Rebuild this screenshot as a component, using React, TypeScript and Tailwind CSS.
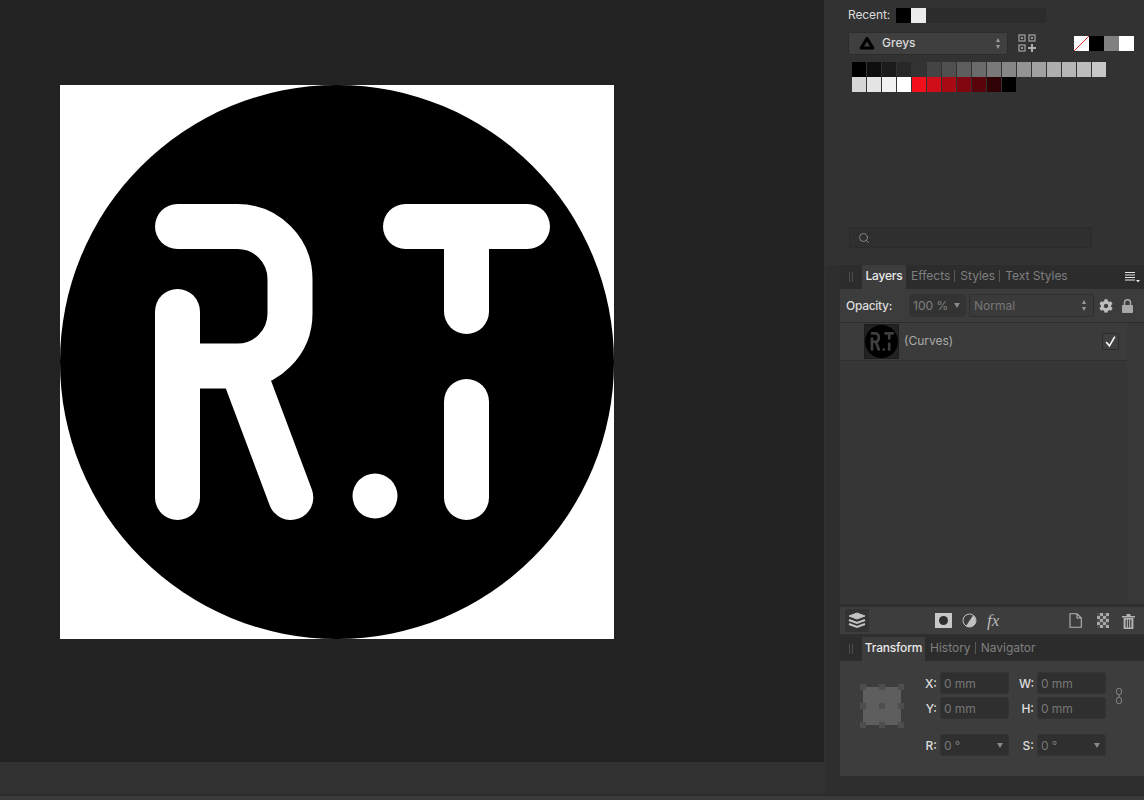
import { FaCog } from "react-icons/fa"
import { Search } from "lucide-react"

const greys = ["bg-[#000000]", "bg-[#0e0e0e]", "bg-[#1b1b1b]", "bg-[#282828]", "bg-[#333333]", "bg-[#444444]", "bg-[#505050]", "bg-[#5e5e5e]", "bg-[#6b6b6b]", "bg-[#797979]", "bg-[#868686]", "bg-[#949494]", "bg-[#a1a1a1]", "bg-[#aeaeae]", "bg-[#b6b6b6]", "bg-[#bdbdbd]", "bg-[#c8c8c8]"]
const reds = ["bg-[#d6d6d6]", "bg-[#e4e4e4]", "bg-[#f1f1f1]", "bg-[#ffffff]", "bg-[#f40f1c]", "bg-[#d00d18]", "bg-[#a80a13]", "bg-[#800710]", "bg-[#58040a]", "bg-[#300205]", "bg-[#000000]"]

// R.T mark, coordinates are the screenshot's minus the image origin (60,85)
function Logo({ className, bg = true }: { className: string; bg?: boolean }) {
    return (
        <svg viewBox="0 0 554 554" className={className}>
            {bg && <rect width="554" height="554" fill="#fff" />}
            <circle cx="277" cy="277" r="277" fill="#000" />
            <g fill="none" stroke={bg ? "#fff" : "#3f3f3f"} strokeWidth="45" strokeLinecap="round">
                <path d="M117.5 141.5H177.5A52.5 52.5 0 0 1 230 194V228.5A52.5 52.5 0 0 1 177.5 281H117.5" />
                <path d="M117.5 226.5V412.5" />
                <path d="M183.7 287L230.8 412.5" />
                <path d="M345.5 141.5H467.5" />
                <path d="M406.5 141.5V226.5" />
                <path d="M406.5 316.5V412.5" />
            </g>
            <circle cx="315" cy="411" r="22.5" fill={bg ? "#fff" : "#3f3f3f"} />
        </svg>
    )
}

function Tabs({ active, others, tabWidth }: { active: string; others: string[]; tabWidth: string }) {
    return (
        <div className="flex h-[24px] items-stretch bg-[#2c2c2c] text-[12px]">
            <div className="flex w-[22px] items-center justify-center gap-[2px]">
                <span className="h-[10px] w-px bg-[#4c4c4c]" />
                <span className="h-[10px] w-px bg-[#4c4c4c]" />
            </div>
            <div className={`flex items-center justify-center bg-[#3d3d3d] pb-[2px] font-medium tracking-[-0.2px] text-[#e8e8e8] ${tabWidth}`}>{active}</div>
            <div className="ml-[5px] flex items-center pb-[2px] text-[#7f7f7f]">
                {others.map((name, i) => (
                    <span key={name} className={i > 0 ? "ml-[4px] border-l border-[#5a5a5a] pl-[5px] leading-[12px]" : "leading-[12px]"}>{name}</span>
                ))}
            </div>
        </div>
    )
}

function Field({ label, value, arrow }: { label: string; value: string; arrow?: boolean }) {
    return (
        <div className="flex items-center gap-[3px]">
            <span className="w-[15px] pt-[2px] text-right text-[12px] font-medium text-[#dedede]">{label}</span>
            <div className="flex h-[22px] w-[69px] items-center justify-between rounded-[3px] border border-[#333] bg-[#2f2f2f] pl-[3px] pr-[5px] text-[12px] tracking-[-0.1px] text-[#777]">
                <span className="pt-[2px]">{value}</span>
                {arrow && <span className="h-0 w-0 border-x-[3px] border-t-[5px] border-x-transparent border-t-[#8a8a8a]" />}
            </div>
        </div>
    )
}

function Stepper() {
    return (
        <span className="flex flex-col gap-[3px]">
            <span className="h-0 w-0 border-x-[2.5px] border-b-[4px] border-x-transparent border-b-[#9a9a9a]" />
            <span className="h-0 w-0 border-x-[2.5px] border-t-[4px] border-x-transparent border-t-[#9a9a9a]" />
        </span>
    )
}

function AnchorGrid() {
    const handles = [0, 1, 2, 3, 4, 5, 6, 7, 8]
    return (
        <div className="grid h-[44px] w-[44px] grid-cols-3 grid-rows-3 bg-[linear-gradient(#5e5e5e,#5e5e5e)] bg-[length:38px_38px] bg-center bg-no-repeat">
            {handles.map((h) => (
                <span key={h} className={`h-[6px] w-[6px] bg-[#4e4e4e] ${h % 3 === 0 ? "justify-self-start" : h % 3 === 1 ? "justify-self-center" : "justify-self-end"} ${h < 3 ? "self-start" : h < 6 ? "self-center" : "self-end"}`} />
            ))}
        </div>
    )
}

export default function App() {
    return (
        <div className="flex h-[800px] w-[1144px] flex-col overflow-hidden bg-[#313131] font-['Inter','Liberation_Sans',sans-serif]">
            <div className="flex h-[794px]">
                <section className="w-[825px] shrink-0">
                    <div className="h-[762px] w-[824px] bg-[#222222] pl-[60px] pt-[85px]">
                        <Logo className="h-[554px] w-[554px]" />
                    </div>
                </section>

                <aside className="flex w-[319px] flex-col">
                    <div className="flex h-[265px] flex-col bg-[#323232] pl-[23px]">
                        <div className="mt-[7px] flex h-[16px] items-center">
                            <span className="w-[48px] text-[12px] tracking-[-0.1px] text-[#dcdcdc]">Recent:</span>
                            <div className="flex h-[15px] w-[150px] bg-[#2c2c2c]">
                                <span className="w-[15px] bg-black" />
                                <span className="w-[15px] bg-[#ececec]" />
                            </div>
                        </div>

                        <div className="mt-[9px] flex h-[22px] items-center">
                            <div className="flex h-[23px] w-[160px] items-center rounded-[2px] border border-[#2c2c2c] bg-[#3f3f3f] pl-[10px] pr-[7px]">
                                <svg viewBox="0 0 16 14" className="h-[14px] w-[16px]">
                                    <path d="M8 2.5L13.8 12H2.2Z" fill="none" stroke="#000" strokeWidth="3.2" strokeLinejoin="round" />
                                </svg>
                                <span className="ml-[7px] flex-1 text-[12px] font-medium text-[#d8d8d8]">Greys</span>
                                <Stepper />
                            </div>
                            <svg viewBox="0 0 18 18" className="ml-[10px] h-[18px] w-[18px]">
                                <g fill="none" stroke="#9a9a9a" strokeWidth="1.3">
                                    <rect x="1" y="1" width="6" height="6" />
                                    <rect x="11" y="1" width="6" height="6" />
                                    <rect x="1" y="11" width="6" height="6" />
                                </g>
                                <path d="M3 3h2v2H3zM13 3h2v2h-2zM3 13h2v2H3z" fill="#9a9a9a" />
                                <path d="M13 10h2v3h3v2h-3v3h-2v-3h-3v-2h3z" fill="#b0b0b0" />
                            </svg>
                            <div className="ml-[38px] flex h-[15px]">
                                <svg viewBox="0 0 15 15" className="h-[15px] w-[15px]">
                                    <rect width="15" height="15" fill="#fff" />
                                    <path d="M0 15L15 0" stroke="#e8202c" strokeWidth="1" />
                                </svg>
                                <span className="w-[15px] bg-black" />
                                <span className="w-[15px] bg-[#808080]" />
                                <span className="w-[15px] bg-white" />
                            </div>
                        </div>

                        <div className="ml-[4px] mt-[8px] flex">
                            {greys.map((c, i) => <span key={i} className={`h-[15px] w-[14px] mr-px ${c}`} />)}
                        </div>
                        <div className="ml-[4px] flex">
                            {reds.map((c, i) => <span key={i} className={`h-[15px] w-[14px] mr-px ${c}`} />)}
                        </div>

                        <div className="ml-px mt-[135px] flex h-[21px] w-[243px] items-center rounded-[2px] border border-[#2a2a2a] bg-[#2f2f2f] pl-[8px]">
                            <Search size={12} strokeWidth={1.5} className="text-[#a0a0a0]" />
                        </div>
                    </div>

                    <div className="flex flex-1 flex-col bg-[#2e2e2e] pl-[15px]">
                        <div className="flex h-[339px] flex-col bg-[#383838]">
                            <div className="relative">
                                <Tabs active="Layers" others={["Effects", "Styles", "Text Styles"]} tabWidth="w-[44px]" />
                                <svg viewBox="0 0 16 12" className="absolute right-[4px] top-[6px] h-[12px] w-[16px]">
                                    <path d="M1 1.5h10M1 4h10M1 6.5h10M1 9h10" stroke="#e4e4e4" strokeWidth="1.2" />
                                    <path d="M12 9h4l-2 2.6z" fill="#e4e4e4" />
                                </svg>
                            </div>

                            <div className="flex h-[34px] items-center border-b border-[#2c2c2c] bg-[#3c3c3c] pl-[6px]">
                                <span className="w-[63px] text-[12px] font-medium tracking-[-0.3px] text-[#dcdcdc]">Opacity:</span>
                                <div className="flex h-[23px] w-[57px] items-center justify-between rounded-[4px] border border-[#333] bg-[#333] pl-[3px] pr-[5px] text-[12px] text-[#808080]">
                                    <span className="pt-px">100 %</span>
                                    <span className="h-0 w-0 border-x-[3px] border-t-[5px] border-x-transparent border-t-[#8a8a8a]" />
                                </div>
                                <div className="ml-[3px] flex h-[23px] w-[125px] items-center justify-between rounded-[2px] border border-[#2e2e2e] bg-[#3a3a3a] pl-[4px] pr-[7px] text-[12px] text-[#777]">
                                    <span>Normal</span>
                                    <Stepper />
                                </div>
                                <FaCog size={14} className="ml-[5px] text-[#bdbdbd]" />
                                <svg viewBox="0 0 11 14" className="ml-[9px] h-[14px] w-[11px]">
                                    <path d="M2.5 6V3.8a3 3 0 0 1 6 0V6" fill="none" stroke="#a8a8a8" strokeWidth="1.5" />
                                    <rect y="6" width="11" height="8" rx="1" fill="#a8a8a8" />
                                </svg>
                            </div>

                            <div className="flex flex-1 bg-[#383838]">
                                <div className="w-[287px] bg-[#363636]">
                                    <div className="flex h-[38px] items-center border-b border-[#2f2f2f] bg-[#3b3b3b] pl-[24px]">
                                        <div className="h-[35px] w-[35px] border border-[#1d1d1d] bg-[#222]">
                                            <Logo className="h-[33px] w-[33px]" bg={false} />
                                        </div>
                                        <span className="mb-[2px] ml-[5px] flex-1 text-[12px] text-[#aaaaaa]">(Curves)</span>
                                        <div className="mb-px mr-[8px] flex h-[17px] w-[17px] items-center justify-center rounded-[2px] border border-[#2b2b2b] bg-[#3f3f3f]">
                                            <svg viewBox="0 0 12 12" className="h-[13px] w-[13px]">
                                                <path d="M2 6.5L5 10L10 1.5" fill="none" stroke="#f8f8f8" strokeWidth="1.5" />
                                            </svg>
                                        </div>
                                    </div>
                                </div>
                            </div>
                        </div>

                        <div className="mt-[3px] flex h-[27px] items-center bg-[#3d3d3d] pl-[5px]">
                            <div className="flex h-[23px] w-[24px] items-center justify-center bg-[#333]">
                                <svg viewBox="0 0 20 18" className="h-[18px] w-[20px]">
                                    <g fill="none" stroke="#c4c4c4" strokeWidth="2">
                                        <path d="M2 4L10 1L18 4L10 7Z" fill="#c4c4c4" strokeWidth="1" />
                                        <path d="M2 8L10 11L18 8" />
                                        <path d="M2 12L10 15L18 12" />
                                    </g>
                                </svg>
                            </div>
                            <svg viewBox="0 0 17 15" className="ml-[66px] h-[15px] w-[17px]">
                                <rect width="17" height="15" fill="#c8c8c8" />
                                <circle cx="8.5" cy="7.5" r="4.5" fill="#2e2e2e" />
                            </svg>
                            <svg viewBox="0 0 15 15" className="ml-[10px] h-[15px] w-[15px]">
                                <circle cx="7.5" cy="7.5" r="6.5" fill="#3d3d3d" stroke="#c0c0c0" strokeWidth="1" />
                                <path d="M11 2.6A6 6 0 0 1 4 13Z" fill="#c0c0c0" />
                            </svg>
                            <span className="ml-[10px] w-[16px] font-['Liberation_Serif',serif] text-[17px] italic leading-none text-[#b8b8b8]">fx</span>
                            <svg viewBox="0 0 13 15" className="ml-[66px] h-[15px] w-[13px]">
                                <path d="M1 .7H8L12.3 5V14.3H1ZM8 .7V5H12.3" fill="none" stroke="#b4b4b4" strokeWidth="1.1" />
                            </svg>
                            <svg viewBox="0 0 12 15" className="ml-[15px] h-[15px] w-[12px]">
                                <rect width="12" height="15" fill="#a8a8a8" />
                                <path d="M0 0h3v3H0zM6 0h3v3H6zM3 3h3v3H3zM9 3h3v3H9zM0 6h3v3H0zM6 6h3v3H6zM3 9h3v3H3zM9 9h3v3H9zM0 12h3v3H0zM6 12h3v3H6z" fill="#505050" />
                            </svg>
                            <svg viewBox="0 0 13 16" className="ml-[13px] h-[16px] w-[13px]">
                                <path d="M0 3h13v1.4H0zM4.5 1h4v2h-4z" fill="#b4b4b4" />
                                <path d="M1.6 5h9.8v11H1.6z" fill="#b4b4b4" />
                                <path d="M3.6 6.5h1.2v8H3.6zM5.9 6.5h1.2v8H5.9zM8.2 6.5h1.2v8H8.2z" fill="#3d3d3d" />
                            </svg>
                        </div>

                        <div className="mt-[3px] bg-[#3d3d3d]">
                            <Tabs active="Transform" others={["History", "Navigator"]} tabWidth="w-[63px]" />
                            <div className="flex h-[115px] pl-[20px]">
                                <div className="mt-[23px]"><AnchorGrid /></div>
                                <div className="ml-[18px] mt-[11px] flex flex-col">
                                    <div className="flex gap-[10px]">
                                        <Field label="X:" value="0 mm" />
                                        <Field label="W:" value="0 mm" />
                                    </div>
                                    <div className="mt-[3px] flex gap-[10px]">
                                        <Field label="Y:" value="0 mm" />
                                        <Field label="H:" value="0 mm" />
                                    </div>
                                    <div className="mt-[15px] flex gap-[10px]">
                                        <Field label="R:" value="0 °" arrow />
                                        <Field label="S:" value="0 °" arrow />
                                    </div>
                                </div>
                                <svg viewBox="0 0 6 16" className="ml-[10px] mt-[27px] h-[16px] w-[6px]">
                                    <g fill="none" stroke="#8a8a8a" strokeWidth="1">
                                        <rect x=".5" y=".5" width="5" height="6" rx="2" />
                                        <rect x=".5" y="9.5" width="5" height="6" rx="2" />
                                        <path d="M3 6.5V9.5" />
                                    </g>
                                </svg>
                            </div>
                        </div>
                    </div>
                </aside>
            </div>
            <div className="h-[2px] bg-[#2b2b2b]" />
            <div className="flex-1 bg-[#3a3a3a]" />
        </div>
    )
}
